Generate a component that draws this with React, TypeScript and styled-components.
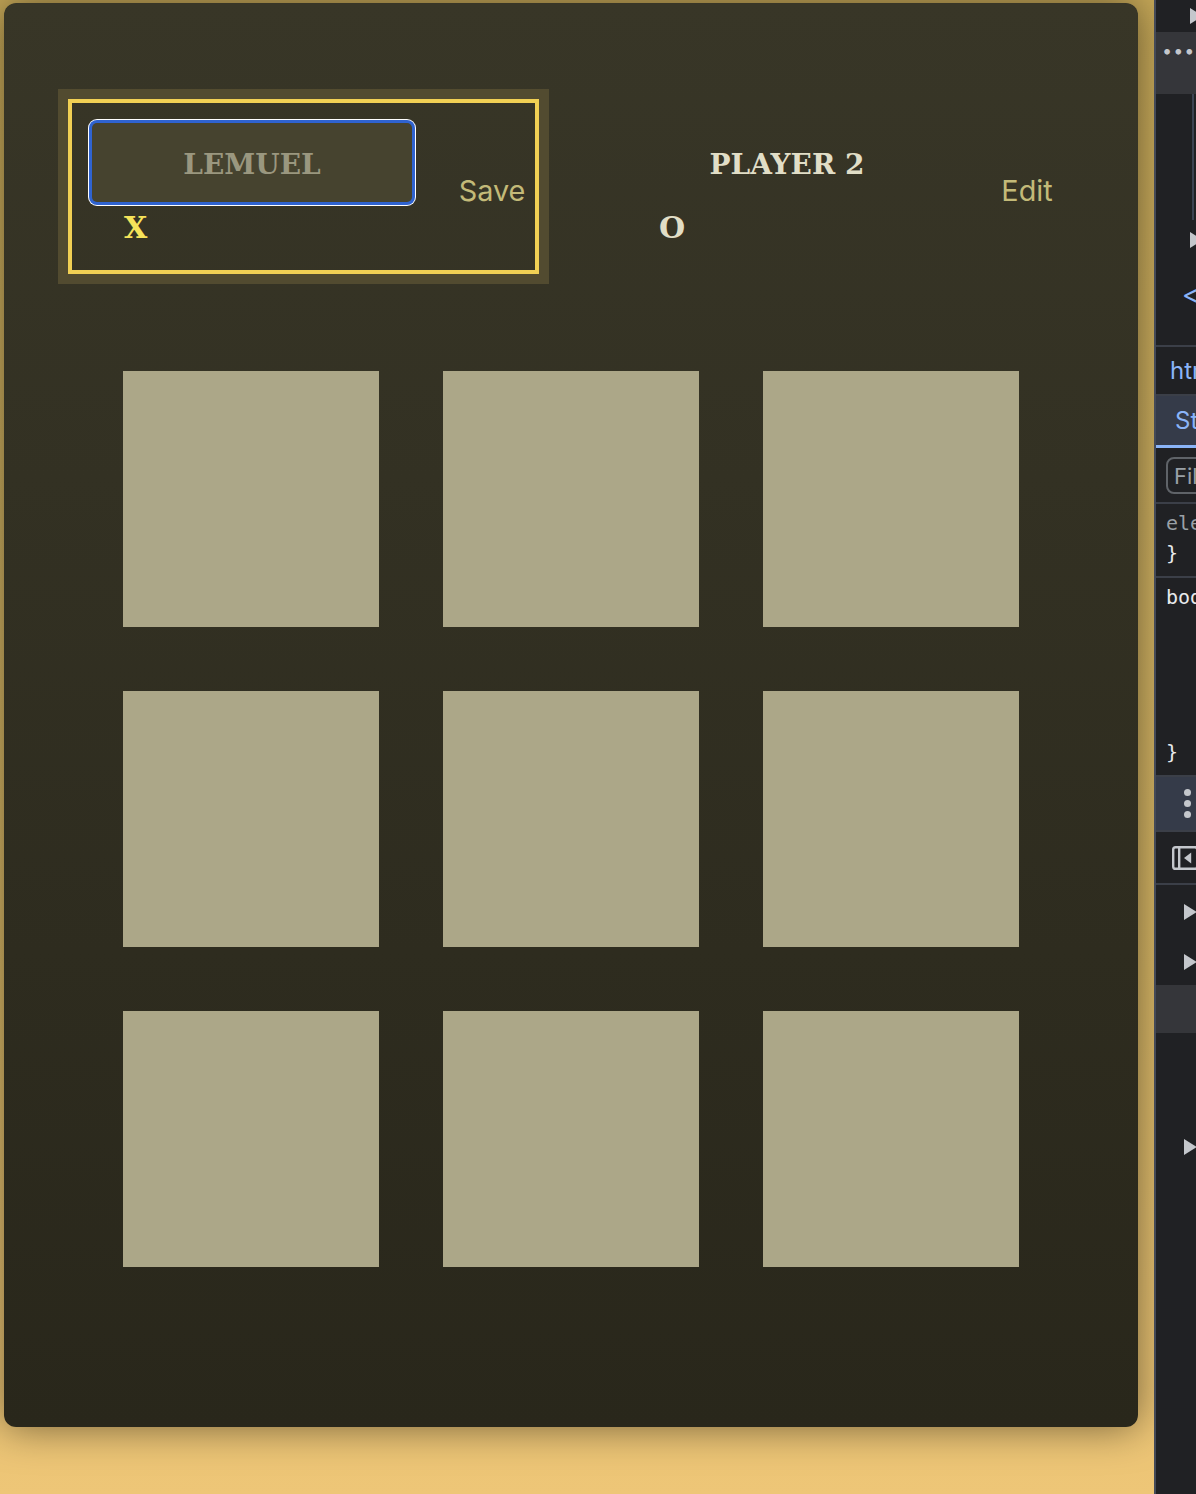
import React from "react";
import styled, { createGlobalStyle } from "styled-components";

const GlobalStyle = createGlobalStyle`
  *, *::before, *::after {
    box-sizing: border-box;
  }
  html, body {
    margin: 0;
    padding: 0;
  }
  body {
    font-family: "DejaVu Serif", "Liberation Serif", serif;
    background: #202124;
  }
`;

const Page = styled.div`
  display: flex;
  width: 1196px;
  height: 1494px;
  overflow: hidden;
`;

const Stage = styled.main`
  flex: 0 0 1154px;
  padding: 3px 16px 0 4px;
  background: linear-gradient(180deg, #c6a858 0%, #cdaf60 35%, #d8b766 65%, #eec677 100%);
`;

const GameContainer = styled.div`
  width: 1134px;
  padding: 64px;
  border-radius: 12px;
  background: linear-gradient(#383627, #29271b);
  box-shadow: 0 0 40px rgba(0, 0, 0, 0.5);
`;

const Players = styled.ol`
  list-style: none;
  padding: 0;
  margin: 32px 0;
  display: flex;
  justify-content: space-between;
  align-items: center;
  gap: 64px;
`;

const PlayerItem = styled.li<{ $active?: boolean }>`
  display: flex;
  align-items: center;
  width: 50%;
  border: 4px solid ${(p) => (p.$active ? "#f1d054" : "transparent")};
  box-shadow: ${(p) => (p.$active ? "0 0 0 10px #524b30" : "none")};
`;

const PlayerInfo = styled.span`
  flex: 1;
  display: flex;
  flex-direction: column;
  align-items: flex-start;
  border: 4px solid transparent;
  padding: 16px;
  font-weight: bold;
`;

const NameInput = styled.input`
  display: block;
  font: inherit;
  font-weight: bold;
  font-size: 28px;
  width: 320px;
  height: 79px;
  border: none;
  padding: 18px 16px 14px;
  border-radius: 5px;
  background-color: #46432f;
  color: #9a977f;
  text-align: center;
  text-transform: uppercase;
  outline: none;
  box-shadow: 0 0 0 3px #2f63d0, 0 0 0 4px #ffffff;
`;

const PlayerName = styled.span`
  display: block;
  width: 320px;
  height: 79px;
  padding: 18px 16px 14px;
  font-size: 28px;
  line-height: 47px;
  color: #e1dec7;
  text-transform: uppercase;
  text-align: center;
  white-space: nowrap;
`;

const PlayerSymbol = styled.span<{ $active?: boolean }>`
  margin-left: 32px;
  padding-top: 4px;
  font-size: 30px;
  line-height: 44px;
  color: ${(p) => (p.$active ? "#f6e35a" : "#e1dec7")};
`;

const PlayerButton = styled.button`
  flex: 0 0 96px;
  width: 96px;
  border: none;
  background: none;
  color: #c3ba78;
  font-family: Inter, "Liberation Sans", sans-serif;
  font-size: 28.8px;
  padding: 16px 2px 8px 12px;
  text-align: center;
  cursor: pointer;
`;

const Board = styled.ol`
  list-style: none;
  padding: 0;
  margin: 97px 0 96px;
  display: flex;
  flex-direction: column;
  gap: 64px;
`;

const BoardRow = styled.li`
  display: flex;
  justify-content: center;
  gap: 64px;
`;

const Cell = styled.button`
  width: 256px;
  height: 256px;
  border: none;
  padding: 0;
  background: #aca788;
  cursor: pointer;
`;

/* devtools strip on the right edge */
const DevTools = styled.aside`
  flex: 0 0 42px;
  display: flex;
  flex-direction: column;
  overflow: hidden;
  background: #202124;
  border-left: 2px solid #444a58;
  color: #c4c7cc;
  font-family: Inter, "Liberation Sans", sans-serif;
  white-space: nowrap;
`;

const DevRow = styled.div<{ $h: number; $bg?: string; $line?: boolean; $pad?: number; $align?: string }>`
  flex: 0 0 ${(p) => p.$h}px;
  height: ${(p) => p.$h}px;
  display: flex;
  align-items: ${(p) => p.$align || "center"};
  padding-left: ${(p) => p.$pad ?? 8}px;
  background: ${(p) => p.$bg || "transparent"};
  border-bottom: ${(p) => (p.$line ? "2px solid #3b3f48" : "none")};
  overflow: hidden;
`;

const Arrow = styled.span<{ $down?: boolean }>`
  display: inline-block;
  width: 0;
  height: 0;
  ${(p) =>
    p.$down
      ? `border-left: 8px solid transparent; border-right: 8px solid transparent; border-top: 14px solid #c4c7cc;`
      : `border-top: 8px solid transparent; border-bottom: 8px solid transparent; border-left: 13px solid #c4c7cc;`}
`;

const Dots = styled.span`
  font-size: 18px;
  letter-spacing: 1px;
  color: #c4c7cc;
  margin-right: 6px;
`;

const TreeArea = styled.div`
  flex: 0 0 253px;
  display: flex;
  flex-direction: column;
  border-bottom: 2px solid #3b3f48;
`;

const TreeLine = styled.div`
  height: 126px;
  margin-left: 36px;
  border-left: 2px solid #3d4452;
`;

const BlueText = styled.span<{ $size?: number }>`
  color: #8ab4f8;
  font-size: ${(p) => p.$size || 24}px;
`;

const TabRow = styled(DevRow)`
  border-bottom: 3px solid #8ab4f8;
`;

const FilterBox = styled.span`
  display: inline-block;
  height: 37px;
  padding: 4px 6px;
  border: 2px solid #5f6368;
  border-radius: 8px;
  color: #9aa0a6;
  font-size: 22px;
  line-height: 26px;
`;

const Code = styled.span<{ $dim?: boolean }>`
  display: block;
  font-family: "DejaVu Sans Mono", "Liberation Mono", monospace;
  font-size: 20px;
  line-height: 30px;
  color: ${(p) => (p.$dim ? "#9aa0a6" : "#e8eaed")};
`;

const CodeBlock = styled.div<{ $h: number }>`
  flex: 0 0 ${(p) => p.$h}px;
  display: flex;
  flex-direction: column;
  justify-content: space-between;
  padding: 4px 0 8px 10px;
  border-bottom: 2px solid #3b3f48;
`;

const VDots = styled.span`
  display: flex;
  flex-direction: column;
  gap: 4px;
  margin-left: 20px;
  & > i {
    width: 7px;
    height: 7px;
    border-radius: 50%;
    background: #c4c7cc;
  }
`;

const Player: React.FC<{ name: string; symbol: string; active?: boolean; editing?: boolean }> = ({
  name,
  symbol,
  active,
  editing,
}) => (
  <PlayerItem $active={active}>
    <PlayerInfo>
      {editing ? <NameInput defaultValue={name} /> : <PlayerName>{name}</PlayerName>}
      <PlayerSymbol $active={active}>{symbol}</PlayerSymbol>
    </PlayerInfo>
    <PlayerButton>{editing ? "Save" : "Edit"}</PlayerButton>
  </PlayerItem>
);

const board = [
  [null, null, null],
  [null, null, null],
  [null, null, null],
];

export default function App() {
  return (
    <>
      <GlobalStyle />
      <Page>
        <Stage>
          <GameContainer>
            <Players>
              <Player name="Lemuel" symbol="X" active editing />
              <Player name="Player 2" symbol="O" />
            </Players>
            <Board>
              {board.map((row, r) => (
                <BoardRow key={r}>
                  {row.map((_, c) => (
                    <Cell key={c} />
                  ))}
                </BoardRow>
              ))}
            </Board>
          </GameContainer>
        </Stage>
        <DevTools>
          <DevRow $h={32} $pad={34}>
            <Arrow />
          </DevRow>
          <DevRow $h={62} $bg="#35363a" $pad={6} $align="flex-start">
            <Dots style={{ marginTop: 8 }}>•••</Dots>
            <span style={{ marginTop: 16 }}>
              <Arrow $down />
            </span>
          </DevRow>
          <TreeArea>
            <TreeLine />
            <DevRow $h={40} $pad={34}>
              <Arrow />
            </DevRow>
            <DevRow $h={68} $pad={26}>
              <BlueText $size={26}>&lt;</BlueText>
            </DevRow>
          </TreeArea>
          <DevRow $h={49} $line $pad={14}>
            <BlueText>html</BlueText>
          </DevRow>
          <TabRow $h={52} $bg="#353b49" $pad={19}>
            <BlueText>Styles</BlueText>
          </TabRow>
          <DevRow $h={56} $line $pad={10}>
            <FilterBox>Filter</FilterBox>
          </DevRow>
          <CodeBlock $h={68}>
            <Code $dim>element.style {"{"}</Code>
            <Code>{"}"}</Code>
          </CodeBlock>
          <CodeBlock $h={199}>
            <Code>body {"{"}</Code>
            <Code>{"}"}</Code>
          </CodeBlock>
          <DevRow $h={55} $line $bg="#353b49">
            <VDots>
              <i />
              <i />
              <i />
            </VDots>
          </DevRow>
          <DevRow $h={53} $line $pad={16}>
            <svg width="30" height="30" viewBox="0 0 30 30">
              <rect x="1.5" y="1.5" width="30" height="27" rx="3" fill="none" stroke="#c4c7cc" strokeWidth="3" />
              <line x1="9" y1="2" x2="9" y2="28" stroke="#c4c7cc" strokeWidth="3" />
              <path d="M24 8 L15 15 L24 22 Z" fill="#c4c7cc" />
            </svg>
          </DevRow>
          <DevRow $h={54} $pad={28}>
            <Arrow />
          </DevRow>
          <DevRow $h={46} $pad={28}>
            <Arrow />
          </DevRow>
          <DevRow $h={48} $bg="#35363a" />
          <DevRow $h={144} $pad={28} $align="flex-end">
            <span style={{ marginBottom: 18 }}>
              <Arrow />
            </span>
          </DevRow>
        </DevTools>
      </Page>
    </>
  );
}
